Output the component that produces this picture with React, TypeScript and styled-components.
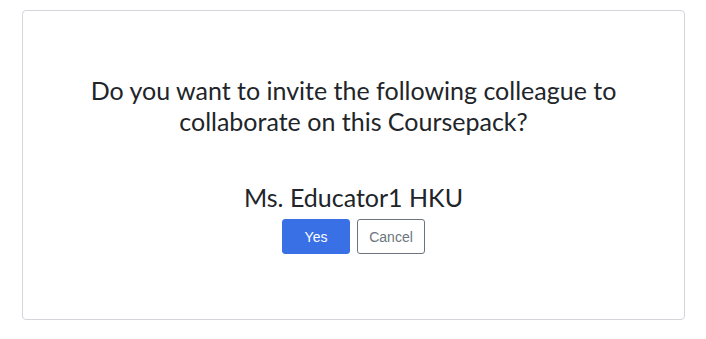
import React from 'react';
import styled, { createGlobalStyle } from 'styled-components';

const GlobalStyle = createGlobalStyle`
  body {
    margin: 0;
    background: #ffffff;
    font-family: Lato, "Open Sans", sans-serif;
    color: #212529;
  }
`;

const Page = styled.div`
  padding: 10px 21px 0 22px;
`;

const Card = styled.div`
  box-sizing: border-box;
  height: 310px;
  border: 1px solid #d3d5da;
  border-radius: 4px;
  padding: 64px 40px 0;
  display: flex;
  flex-direction: column;
  align-items: center;
  text-align: center;
`;

const Question = styled.h2`
  margin: 0;
  font-size: 25px;
  font-weight: 400;
  line-height: 31px;
`;

const Name = styled.div`
  margin-top: 45px;
  font-size: 25px;
  line-height: 30px;
`;

const Actions = styled.div`
  display: flex;
  gap: 7px;
  margin-top: 7px;
`;

const Button = styled.button<{ $primary?: boolean }>`
  box-sizing: border-box;
  width: 68px;
  height: 35px;
  border-radius: 3px;
  font-family: "Liberation Sans", Arial, sans-serif;
  font-size: 14px;
  cursor: pointer;
  border: 1px solid ${(p) => (p.$primary ? '#3a70e6' : '#6c757d')};
  background: ${(p) => (p.$primary ? '#3a70e6' : '#ffffff')};
  color: ${(p) => (p.$primary ? '#ffffff' : '#6c757d')};
`;

export default function App() {
  return (
    <Page>
      <GlobalStyle />
      <Card>
        <Question>
          Do you want to invite the following colleague to collaborate on this Coursepack?
        </Question>
        <Name>Ms. Educator1 HKU</Name>
        <Actions>
          <Button $primary>Yes</Button>
          <Button>Cancel</Button>
        </Actions>
      </Card>
    </Page>
  );
}
